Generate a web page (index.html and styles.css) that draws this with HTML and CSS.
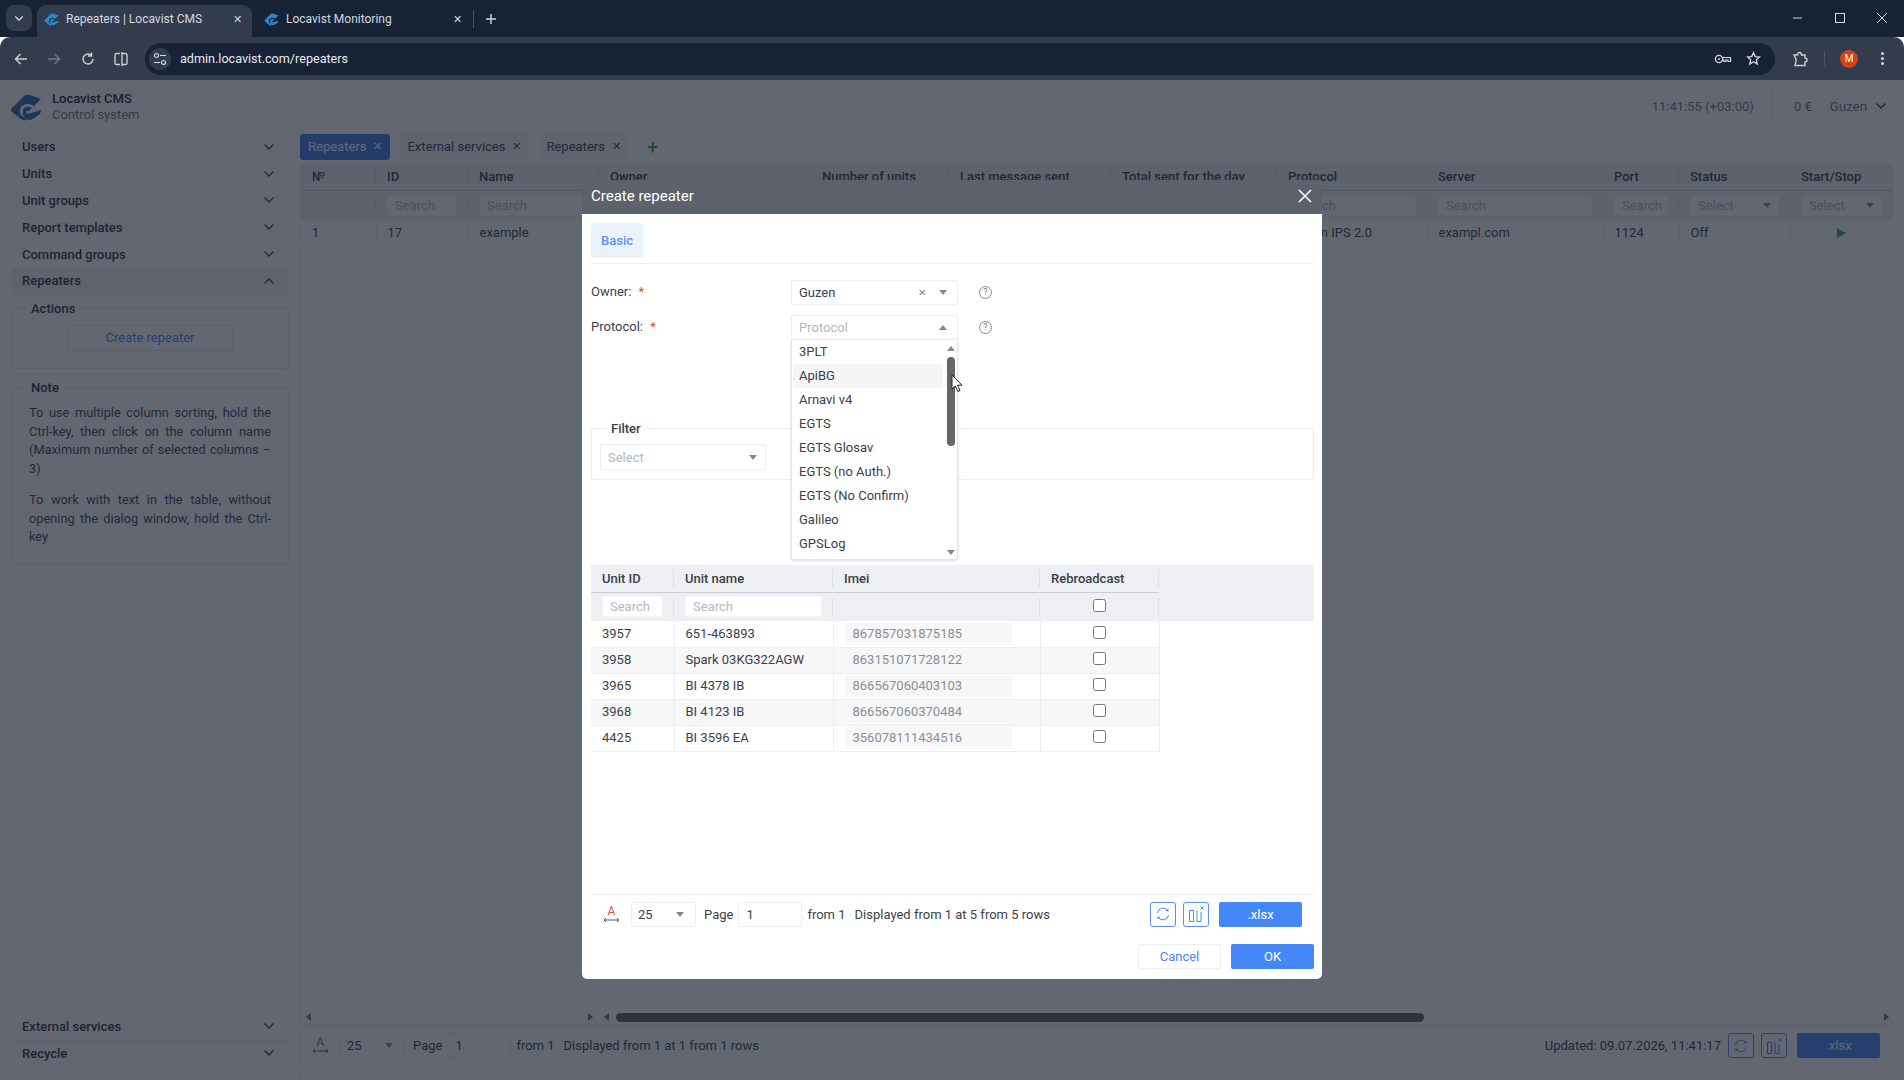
FILE: index.html
```html
<!DOCTYPE html>
<html lang="en">
<head>
  <meta charset="UTF-8">
  <title>Repeaters | Locavist CMS</title>
  <link rel="stylesheet" href="styles.css">
</head>
<body>

  <svg class="defs" width="0" height="0">
    <symbol id="logo" viewBox="0 0 32 27">
      <path d="M1 15 L13 3 Q16 0 20 1 L31 5 L24 12 Q17 8 12 12 Q8 16 11 21 L17 26 Q14 27 11 25 L2 18 Q0 16 1 15Z"/>
      <path d="M14 14 Q18 11 22 14 L19 17 Q17 16 16 18 Q16 20 18 20 L31 16 L30 20 L21 26 Q15 26 13 21 Q12 17 14 14Z"/>
    </symbol>
    <symbol id="chev" viewBox="0 0 12 8">
      <path d="M1.5 1.5 L6 6 L10.5 1.5" fill="none" stroke="currentColor" stroke-width="1.5"/>
    </symbol>
    <symbol id="refresh" viewBox="0 0 16 16">
      <path d="M2.5 7 A5.5 5.5 0 0 1 12.5 4.5 M13.5 9 A5.5 5.5 0 0 1 3.5 11.5" fill="none" stroke="currentColor" stroke-width="1"/>
      <path d="M10.5 5 L13.5 5.5 L13.5 2.5Z M5.5 11 L2.5 10.5 L2.5 13.5Z" fill="currentColor"/>
    </symbol>
    <symbol id="cols" viewBox="0 0 18 18">
      <path d="M2.5 5.5 H6.5 V16.5 H2.5Z M10 5.5 V16.5 H14 V7" fill="none" stroke="currentColor" stroke-width="1"/>
      <path d="M13.5 1.5 L16.5 4.5 M16.5 1.5 L13.5 4.5" stroke="currentColor" stroke-width="1"/>
    </symbol>
    <symbol id="width" viewBox="0 0 17 6">
      <path d="M1 3 H16 M3 1 L1 3 L3 5 M14 1 L16 3 L14 5" fill="none" stroke="#555" stroke-width="1"/>
    </symbol>
  </svg>

  <!-- Browser tabs -->
  <div class="tabstrip">
    <div class="tab-list">
      <svg width="10" height="7" class="ic-light"><use href="#chev"/></svg>
    </div>
    <div class="browser-tab active">
      <svg class="favicon"><use href="#logo"/></svg>
      <span class="browser-tab-title">Repeaters | Locavist CMS</span>
      <span class="browser-tab-x">✕</span>
    </div>
    <div class="browser-tab">
      <svg class="favicon"><use href="#logo"/></svg>
      <span class="browser-tab-title">Locavist Monitoring</span>
      <span class="browser-tab-x">✕</span>
    </div>
    <div class="tab-sep"></div>
    <svg class="new-tab" width="12" height="12" viewBox="0 0 12 12"><path d="M6 1V11M1 6H11" stroke="#d5d9e0" stroke-width="1.4"/></svg>
    <div class="win-btns">
      <svg width="12" height="12" viewBox="0 0 12 12"><path d="M1 6H10" stroke="#d5d9e0"/></svg>
      <svg width="12" height="12" viewBox="0 0 12 12"><rect x="1.5" y="1.5" width="9" height="9" fill="none" stroke="#d5d9e0"/></svg>
      <svg width="12" height="12" viewBox="0 0 12 12"><path d="M1 1L11 11M11 1L1 11" stroke="#d5d9e0"/></svg>
    </div>
  </div>

  <!-- Browser toolbar -->
  <div class="toolbar">
    <svg class="tool" viewBox="0 0 16 16"><path d="M14 8H3M7.5 3L2.5 8L7.5 13" fill="none" stroke="#c9ced6" stroke-width="1.5"/></svg>
    <svg class="tool fwd" viewBox="0 0 16 16"><path d="M2 8H13M8.5 3L13.5 8L8.5 13" fill="none" stroke="#6d7684" stroke-width="1.5"/></svg>
    <svg class="tool" viewBox="0 0 16 16"><path d="M13 8A5 5 0 1 1 11 4M11.5 1.5V5H8" fill="none" stroke="#c9ced6" stroke-width="1.5"/></svg>
    <svg class="tool split" viewBox="0 0 16 16"><path d="M7 2.5H3.5Q2 2.5 2 4V12Q2 13.5 3.5 13.5H7M9 1V15M9 2.5H12.5Q14 2.5 14 4V12Q14 13.5 12.5 13.5H9" fill="none" stroke="#c9ced6" stroke-width="1.4"/></svg>
    <div class="urlbar">
      <span class="tune">
        <svg width="14" height="14" viewBox="0 0 14 14"><circle cx="3.5" cy="3.5" r="2" fill="none" stroke="#d5d9e0" stroke-width="1.2"/><path d="M7 3.5H13M1 10.5H7" stroke="#d5d9e0" stroke-width="1.2"/><circle cx="10.5" cy="10.5" r="2" fill="none" stroke="#d5d9e0" stroke-width="1.2"/></svg>
      </span>
      <span class="url">admin.locavist.com/repeaters</span>
      <svg class="url-ic" width="18" height="12" viewBox="0 0 18 12"><circle cx="5" cy="6" r="3.6" fill="none" stroke="#d5d9e0" stroke-width="1.4"/><circle cx="5" cy="6" r="1" fill="#d5d9e0"/><path d="M8.5 4.5H16.5V8.5H14V7H12V8.5H10V7.2H8.5" fill="none" stroke="#d5d9e0" stroke-width="1.2"/></svg>
      <svg class="url-ic" width="15" height="15" viewBox="0 0 16 16"><path d="M8 1.8L9.9 6L14.4 6.4L11 9.4L12 13.9L8 11.5L4 13.9L5 9.4L1.6 6.4L6.1 6Z" fill="none" stroke="#d5d9e0" stroke-width="1.4"/></svg>
    </div>
    <svg class="tool ext" viewBox="0 0 16 16"><path d="M2 4H5.5Q5.5 1.5 7.5 1.5Q9.5 1.5 9.5 4H13V7Q15 7 15 9Q15 11 13 11V14.5H2.8L4 11V8L2 4Z" fill="none" stroke="#c9ced6" stroke-width="1.4"/></svg>
    <div class="tool-sep"></div>
    <span class="avatar">M</span>
    <span class="dots"><i></i><i></i><i></i></span>
  </div>

  <!-- Page -->
  <div class="page">
    <header class="topbar">
      <svg class="logo"><use href="#logo"/></svg>
      <div class="brand">
        <div class="brand-name">Locavist CMS</div>
        <div class="brand-sub">Control system</div>
      </div>
      <div class="top-right">
        <span class="clock">11:41:55 (+03:00)</span>
        <span class="balance">0 €</span>
        <span class="user">Guzen</span>
        <svg class="chev" width="12" height="8"><use href="#chev"/></svg>
      </div>
    </header>

    <div class="workspace">
      <aside class="sidebar">
        <div class="menu-item">Users<svg class="chev" width="12" height="8"><use href="#chev"/></svg></div>
        <div class="menu-item">Units<svg class="chev" width="12" height="8"><use href="#chev"/></svg></div>
        <div class="menu-item">Unit groups<svg class="chev" width="12" height="8"><use href="#chev"/></svg></div>
        <div class="menu-item">Report templates<svg class="chev" width="12" height="8"><use href="#chev"/></svg></div>
        <div class="menu-item">Command groups<svg class="chev" width="12" height="8"><use href="#chev"/></svg></div>
        <div class="menu-item open">Repeaters<svg class="chev up" width="12" height="8"><use href="#chev"/></svg></div>

        <fieldset class="side-box">
          <legend>Actions</legend>
          <div class="create-btn">Create repeater</div>
        </fieldset>

        <fieldset class="side-box note">
          <legend>Note</legend>
          <p>To use multiple column sorting, hold the Ctrl-key, then click on the column name (Maximum number of selected columns – 3)</p>
          <p>To work with text in the table, without opening the dialog window, hold the Ctrl-key</p>
        </fieldset>

        <div class="menu-bottom">
          <div class="menu-item">External services<svg class="chev" width="12" height="8"><use href="#chev"/></svg></div>
          <div class="menu-item">Recycle<svg class="chev" width="12" height="8"><use href="#chev"/></svg></div>
        </div>
      </aside>

      <main class="main">
        <div class="page-tabs">
          <div class="page-tab current">Repeaters<span class="tab-x">✕</span></div>
          <div class="page-tab">External services<span class="tab-x">✕</span></div>
          <div class="page-tab">Repeaters<span class="tab-x">✕</span></div>
          <span class="tab-add">+</span>
        </div>

        <div class="table-area">
          <table class="grid main-grid">
            <colgroup>
              <col style="width:75px"><col style="width:92px"><col style="width:131px"><col style="width:212px">
              <col style="width:138px"><col style="width:162px"><col style="width:166px"><col style="width:150px">
              <col style="width:176px"><col style="width:76px"><col style="width:111px"><col style="width:103px">
            </colgroup>
            <tr class="head">
              <th>№</th><th>ID</th><th>Name</th><th>Owner</th><th>Number of units</th><th>Last message sent</th>
              <th>Total sent for the day</th><th>Protocol</th><th>Server</th><th>Port</th><th>Status</th><th>Start/Stop</th>
            </tr>
            <tr class="filters">
              <th></th>
              <th><span class="inp">Search</span></th>
              <th><span class="inp">Search</span></th>
              <th></th>
              <th></th><th></th><th></th>
              <th><span class="inp">Search</span></th>
              <th><span class="inp">Search</span></th>
              <th><span class="inp">Search</span></th>
              <th><span class="inp sel ph">Select<i class="caret"></i></span></th>
              <th><span class="inp sel ph">Select<i class="caret"></i></span></th>
            </tr>
            <tr class="row">
              <td>1</td><td>17</td><td>example</td><td></td><td></td><td></td><td></td><td>Wialon IPS 2.0</td><td>exampl.com</td><td>1124</td><td>Off</td>
              <td class="center"><i class="play"></i></td>
            </tr>
          </table>
        </div>

        <div class="hscroll">
          <i class="arr left"></i><span class="grow-a"></span><i class="arr right"></i>
          <i class="arr left second"></i>
          <span class="thumb"></span>
          <span class="grow-b"></span>
          <i class="arr right"></i>
        </div>

        <div class="pager">
          <span class="width-ic">A<svg width="17" height="6"><use href="#width"/></svg></span>
          <span class="inp sel size">25<i class="caret"></i></span>
          <span>Page</span>
          <span class="inp page-no">1</span>
          <span>from 1</span>
          <span class="shown">Displayed from 1 at 1 from 1 rows</span>
          <span class="pager-right">
            <span>Updated: 09.07.2026, 11:41:17</span>
            <span class="icon-btn"><svg width="16" height="16"><use href="#refresh"/></svg></span>
            <span class="icon-btn"><svg width="18" height="18"><use href="#cols"/></svg></span>
            <span class="btn primary xlsx">.xlsx</span>
          </span>
        </div>
      </main>
    </div>

    <div class="backdrop"></div>

    <!-- Create repeater dialog -->
    <div class="modal">
      <div class="modal-title">
        <span>Create repeater</span>
        <svg width="14" height="14" viewBox="0 0 14 14"><path d="M1 1L13 13M13 1L1 13" stroke="#fff" stroke-width="1.5"/></svg>
      </div>
      <div class="modal-body">
        <div class="modal-tabs"><span class="modal-tab">Basic</span></div>

        <div class="field">
          <label>Owner: <b>*</b></label>
          <span class="inp sel value">Guzen<span class="clear">✕</span><i class="caret"></i></span>
          <span class="help">?</span>
        </div>
        <div class="field">
          <label>Protocol: <b>*</b></label>
          <div class="combo">
            <span class="inp sel value ph">Protocol<i class="caret up"></i></span>
            <div class="dropdown">
              <div class="opt">3PLT</div>
              <div class="opt hover">ApiBG</div>
              <div class="opt">Arnavi v4</div>
              <div class="opt">EGTS</div>
              <div class="opt">EGTS Glosav</div>
              <div class="opt">EGTS (no Auth.)</div>
              <div class="opt">EGTS (No Confirm)</div>
              <div class="opt">Galileo</div>
              <div class="opt">GPSLog</div>
              <div class="vscroll"><i class="caret up"></i><span class="vthumb"></span><i class="caret"></i></div>
              <svg class="cursor" width="12" height="19" viewBox="0 0 12 19"><path d="M1 1V15L4.3 12L6.8 17.5L9 16.5L6.5 11.2H11Z" fill="#fff" stroke="#222" stroke-width="1"/></svg>
            </div>
          </div>
          <span class="help">?</span>
        </div>

        <fieldset class="filter-box">
          <legend>Filter</legend>
          <span class="inp sel ph filter-sel">Select<i class="caret"></i></span>
        </fieldset>

        <div class="units">
          <table class="grid unit-grid">
            <colgroup>
              <col style="width:83px"><col style="width:159px"><col style="width:207px"><col style="width:119px">
            </colgroup>
            <tr class="head"><th>Unit ID</th><th>Unit name</th><th>Imei</th><th>Rebroadcast</th></tr>
            <tr class="filters">
              <th><span class="inp">Search</span></th>
              <th><span class="inp">Search</span></th>
              <th></th>
              <th class="center"><input type="checkbox"></th>
            </tr>
            <tr class="row"><td>3957</td><td>651-463893</td><td><span class="imei">867857031875185</span></td><td class="center"><input type="checkbox"></td></tr>
            <tr class="row"><td>3958</td><td>Spark 03KG322AGW</td><td><span class="imei">863151071728122</span></td><td class="center"><input type="checkbox"></td></tr>
            <tr class="row"><td>3965</td><td>BI 4378 IB</td><td><span class="imei">866567060403103</span></td><td class="center"><input type="checkbox"></td></tr>
            <tr class="row"><td>3968</td><td>BI 4123 IB</td><td><span class="imei">866567060370484</span></td><td class="center"><input type="checkbox"></td></tr>
            <tr class="row"><td>4425</td><td>BI 3596 EA</td><td><span class="imei">356078111434516</span></td><td class="center"><input type="checkbox"></td></tr>
          </table>
        </div>

        <div class="pager modal-pager">
          <span class="width-ic">A<svg width="17" height="6"><use href="#width"/></svg></span>
          <span class="inp sel size">25<i class="caret"></i></span>
          <span>Page</span>
          <span class="inp page-no">1</span>
          <span>from 1</span>
          <span class="shown">Displayed from 1 at 5 from 5 rows</span>
          <span class="pager-right">
            <span class="icon-btn"><svg width="16" height="16"><use href="#refresh"/></svg></span>
            <span class="icon-btn"><svg width="18" height="18"><use href="#cols"/></svg></span>
            <span class="btn primary xlsx">.xlsx</span>
          </span>
        </div>

        <div class="modal-actions">
          <span class="btn cancel">Cancel</span>
          <span class="btn primary">OK</span>
        </div>
      </div>
    </div>
  </div>

</body>
</html>
```

FILE: styles.css
```css
* {
  box-sizing: border-box;
}
html, body {
  margin: 0;
  height: 100%;
}
body {
  display: flex;
  flex-direction: column;
  height: 1080px;
  overflow: hidden;
  font-family: Roboto, Arial, sans-serif;
  font-size: 13px;
  color: #3a3f4a;
  background: #fff;
}
.defs {
  position: absolute;
}

/* Browser chrome */
.tabstrip {
  display: flex;
  align-items: flex-end;
  height: 37px;
  padding-left: 6px;
  background: #172234;
  color: #d5d9e0;
  font-size: 12px;
}
.tab-list {
  display: flex;
  align-items: center;
  justify-content: center;
  width: 26px;
  height: 26px;
  margin: 0 5px 6px 0;
  border-radius: 8px;
  background: #323c4c;
}
.ic-light {
  color: #e4e7ec;
}
.browser-tab {
  display: flex;
  align-items: center;
  width: 215px;
  height: 32px;
  margin-right: 5px;
  padding: 0 10px 4px 7px;
  border-radius: 9px 9px 0 0;
}
.browser-tab.active {
  background: #323c4c;
}
.favicon {
  width: 15px;
  height: 13px;
  margin-right: 7px;
  fill: #2f86cf;
}
.browser-tab-title {
  flex: 1;
  white-space: nowrap;
}
.browser-tab-x {
  font-size: 11px;
}
.tab-sep {
  width: 1px;
  height: 18px;
  margin: 0 0 9px -4px;
  background: #4a5362;
}
.new-tab {
  margin: 0 0 12px 11px;
}
.win-btns {
  display: flex;
  gap: 30px;
  margin: 0 16px 13px auto;
}
.toolbar {
  display: flex;
  align-items: center;
  height: 43px;
  padding: 0 20px 0 13px;
  border-radius: 10px 10px 0 0;
  background: #323c4c;
}
.tool {
  flex: none;
  width: 16px;
  height: 16px;
  margin-right: 17px;
}
.tool.fwd {
  margin-right: 18px;
}
.tool.split {
  margin-right: 16px;
}
.urlbar {
  display: flex;
  align-items: center;
  flex: 1;
  height: 32px;
  padding: 0 14px 0 4px;
  border-radius: 16px;
  background: #172234;
  color: #e6e9ee;
}
.tune {
  display: flex;
  align-items: center;
  justify-content: center;
  width: 22px;
  height: 22px;
  margin-right: 9px;
  border-radius: 50%;
  background: #323c4c;
}
.url {
  flex: 1;
  font-size: 12.6px;
}
.url-ic {
  margin-left: 14px;
}
.ext {
  margin: 0 16px 0 17px;
}
.tool-sep {
  width: 1px;
  height: 15px;
  margin-right: 15px;
  background: #4a5362;
}
.avatar {
  display: flex;
  align-items: center;
  justify-content: center;
  width: 18px;
  height: 18px;
  margin-right: 23px;
  border-radius: 50%;
  background: #d8401a;
  color: #fff;
  font-size: 10px;
}
.dots {
  display: flex;
  flex-direction: column;
  gap: 2px;
}
.dots i {
  width: 3px;
  height: 3px;
  border-radius: 50%;
  background: #d5d9e0;
}

/* Page */
.page {
  position: relative;
  display: flex;
  flex-direction: column;
  flex: 1;
  min-height: 0;
}
.topbar {
  display: flex;
  align-items: center;
  height: 52px;
  padding: 0 17px 0 10px;
}
.logo {
  width: 32px;
  height: 27px;
  margin: 2px 10px 0 0;
  fill: #2b6cab;
}
.brand-name {
  font-weight: 500;
  color: #1f2530;
  line-height: 16px;
}
.brand-sub {
  line-height: 15px;
  color: #737883;
}
.top-right {
  display: flex;
  align-items: center;
  margin-left: auto;
  color: #737883;
}
.clock {
  padding: 8px 18px 8px 0;
  border-right: 1px solid #e3e4e8;
}
.balance {
  margin: 0 18px 0 21px;
}
.user {
  margin-right: 8px;
  font-size: 13.3px;
}
.chev {
  color: #444a55;
}
.chev.up {
  transform: rotate(180deg);
}
.workspace {
  display: flex;
  flex: 1;
  min-height: 0;
}

/* Sidebar */
.sidebar {
  display: flex;
  flex-direction: column;
  flex: none;
  width: 301px;
  padding: 2px 11px 14px 11px;
  border-right: 1px solid #eceef1;
}
.menu-item {
  display: flex;
  align-items: center;
  justify-content: space-between;
  flex: none;
  height: 26.8px;
  padding: 0 14px 2px 11px;
  border-top: 1px solid #eceef1;
  font-weight: 500;
  color: #2e3440;
}
.menu-item.open {
  background: #f1f2f5;
  border-top-color: #f1f2f5;
}
.side-box {
  margin: 6px 0 0;
  padding: 0 17px 0;
  border: 1px solid #e8e9ed;
  border-radius: 4px;
  min-width: 0;
}
.side-box legend {
  margin-left: -3px;
  padding: 0 5px;
  font-weight: 500;
  color: #2e3440;
}
.create-btn {
  width: 166px;
  height: 26px;
  margin: 9px auto 17px;
  border: 1px solid #e8e9ed;
  color: #4c83ee;
  line-height: 24px;
  text-align: center;
}
.note {
  margin-top: 11px;
}
.note p {
  margin: 9.5px 0 13px;
  font-size: 12.8px;
  line-height: 18.5px;
  text-align: justify;
  color: #3d4452;
}
.note p:last-child {
  margin-bottom: 17px;
}
.menu-bottom {
  margin-top: auto;
  margin-bottom: -1px;
}

/* Main area */
.main {
  display: flex;
  flex-direction: column;
  flex: 1;
  min-width: 0;
  padding: 0 12px 13px 0;
}
.page-tabs {
  display: flex;
  align-items: center;
  gap: 9px;
  flex: none;
  height: 31px;
  margin-left: -1px;
  padding: 2px 0 3px;
}
.page-tab {
  display: flex;
  align-items: center;
  height: 26px;
  padding: 0 8px 2px;
  border-radius: 3px;
  background: #f3f4f6;
  color: #3d4452;
}
.page-tab.current {
  background: #3f7df0;
  color: #fff;
}
.tab-x {
  margin-left: 7px;
  font-size: 11px;
}
.tab-add {
  margin-left: 9px;
  color: #2fa33a;
  font-size: 20px;
  line-height: 20px;
}
.table-area {
  flex: 1;
  min-height: 0;
}
.grid {
  border-collapse: collapse;
  table-layout: fixed;
}
.main-grid {
  width: 1592px;
}
.grid th {
  font-weight: 500;
  text-align: left;
  white-space: nowrap;
  color: #3a3f4a;
  background: linear-gradient(#dfe0e6, #dfe0e6) right center / 1px 18px no-repeat;
}
.grid .head th {
  height: 27px;
  padding: 0 11px;
  border-bottom: 1px solid #c9ccd6;
}
.main-grid tr.head, .main-grid tr.filters {
  background: #eeeff3;
}
.grid .filters th {
  height: 30px;
  padding: 0 11px;
}
.grid td {
  height: 25px;
  padding: 0 11px;
  border-right: 1px solid #eceef1;
  border-bottom: 1px solid #eceef1;
  white-space: nowrap;
  overflow: hidden;
}
.grid .center {
  text-align: center;
}
.inp {
  display: flex;
  align-items: center;
  height: 21px;
  padding: 0 7px;
  border: 1px solid #eceef1;
  border-radius: 2px;
  background: #fff;
  color: #3a3f4a;
  font-weight: 400;
}
.filters .inp {
  border-color: #f4f5f7;
  color: #b4b7bf;
  overflow: hidden;
}
.sel {
  position: relative;
  justify-content: space-between;
}
.ph {
  color: #b4b7bf;
}
.caret {
  flex: none;
  width: 0;
  height: 0;
  border-left: 4.5px solid transparent;
  border-right: 4.5px solid transparent;
  border-top: 5px solid #888;
}
.caret.up {
  border-top: 0;
  border-bottom: 5px solid #888;
}
.play {
  display: inline-block;
  width: 0;
  height: 0;
  border-top: 5px solid transparent;
  border-bottom: 5px solid transparent;
  border-left: 9px solid #36b24a;
  vertical-align: middle;
}

/* Scrollbar and pager */
.hscroll {
  display: flex;
  align-items: center;
  gap: 4px;
  flex: none;
  height: 15px;
  padding: 0 3px 0 5px;
  border-bottom: 1px solid #eceef1;
}
.grow-a {
  width: 269px;
}
.grow-b {
  flex: 1;
}
.arr {
  width: 0;
  height: 0;
  border-top: 4px solid transparent;
  border-bottom: 4px solid transparent;
}
.arr.left {
  border-right: 5px solid #777;
}
.arr.right {
  border-left: 5px solid #777;
}
.arr.second {
  margin-left: 7px;
}
.thumb {
  width: 808px;
  height: 9px;
  margin-left: 3px;
  border-radius: 5px;
  background: #636363;
}
.pager {
  display: flex;
  align-items: center;
  flex: none;
  height: 42px;
  padding: 0 12px 0 11px;
  border-bottom: 1px solid #eceef1;
}
.width-ic {
  display: flex;
  flex-direction: column;
  align-items: center;
  flex: none;
  width: 17px;
  margin-right: 11px;
  color: #d9534f;
  font-size: 12px;
  line-height: 11px;
}
.size {
  width: 65px;
  height: 25px;
  margin-right: 8px;
  padding: 0 11px 0 6px;
}
.page-no {
  width: 64px;
  height: 25px;
  margin: 0 5px;
}
.shown {
  margin-left: 9px;
}
.pager-right {
  display: flex;
  align-items: center;
  gap: 7px;
  margin-left: auto;
}
.icon-btn {
  display: flex;
  align-items: center;
  justify-content: center;
  width: 26px;
  height: 25px;
  border: 1px solid #5a8ff0;
  border-radius: 3px;
  color: #4a86f0;
}
.btn {
  display: flex;
  align-items: center;
  justify-content: center;
  width: 83px;
  height: 25px;
  border-radius: 2px;
}
.primary {
  background: #4488f8;
  color: #fff;
}
.xlsx {
  margin-left: 3px;
}
.cancel {
  border: 1px solid #eceef1;
  color: #4a86f0;
}

/* Dialog */
.backdrop {
  position: absolute;
  inset: 0;
  background: rgba(22, 28, 43, 0.67);
}
.modal {
  position: absolute;
  left: 582px;
  top: 100px;
  display: flex;
  flex-direction: column;
  width: 740px;
  height: 799px;
}
.modal-title {
  display: flex;
  align-items: center;
  justify-content: space-between;
  flex: none;
  height: 34px;
  padding: 0 10px 2px 9px;
  border-radius: 3px 3px 0 0;
  background: #5c616b;
  color: #fff;
  font-size: 15px;
  font-weight: 400;
}
.modal-body {
  display: flex;
  flex-direction: column;
  flex: 1;
  min-height: 0;
  padding: 9px 8px 10px 9px;
  border-radius: 0 0 5px 5px;
  background: #fff;
}
.modal-tabs {
  flex: none;
  height: 41px;
  margin-bottom: 16px;
  border-bottom: 1px solid #eceef1;
}
.modal-tab {
  display: inline-block;
  width: 52px;
  height: 35px;
  border-radius: 3px;
  background: #eaf2fe;
  color: #5c93f7;
  font-weight: 500;
  line-height: 35px;
  text-align: center;
}
.field {
  display: flex;
  align-items: center;
  flex: none;
  height: 25px;
  margin-bottom: 10px;
}
.field label {
  width: 200px;
  margin-top: -3px;
}
.field label b {
  margin-left: 4px;
  color: #e8453c;
  font-weight: 400;
}
.value {
  width: 167px;
  height: 25px;
  padding-right: 10px;
}
.clear {
  margin: 0 13px 0 auto;
  color: #888;
  font-size: 10px;
}
.combo {
  position: relative;
}
.help {
  width: 13px;
  height: 13px;
  margin-left: 21px;
  border: 1px solid #888;
  border-radius: 50%;
  color: #777;
  font-size: 9px;
  line-height: 11px;
  text-align: center;
}
.dropdown {
  position: absolute;
  left: 0;
  top: 25px;
  z-index: 2;
  width: 167px;
  height: 220px;
  padding: 0 0 0 1px;
  border: 1px solid #e2e3e7;
  border-top: 0;
  border-radius: 0 0 2px 2px;
  background: #fff;
  box-shadow: 0 1px 3px rgba(0, 0, 0, 0.15);
  color: #3a3f4a;
}
.opt {
  height: 24px;
  margin-right: 14px;
  padding-left: 6px;
  line-height: 24px;
}
.opt.hover {
  background: #f5f5f5;
}
.vscroll {
  position: absolute;
  right: 2px;
  top: 6px;
  bottom: 4px;
  display: flex;
  flex-direction: column;
  align-items: center;
  justify-content: space-between;
  width: 9px;
}
.vscroll .caret {
  border-left-width: 4px;
  border-right-width: 4px;
}
.vthumb {
  width: 8px;
  height: 89px;
  margin: 6px 0 auto;
  border-radius: 4px;
  background: #666;
}
.cursor {
  position: absolute;
  left: 159px;
  top: 34px;
}
.filter-box {
  flex: none;
  height: 59px;
  margin: 71px 0 0;
  padding: 0 8px;
  border: 1px solid #eceef1;
  border-radius: 2px;
  min-width: 0;
}
.filter-box legend {
  margin-left: 6px;
  padding: 0 5px;
  font-weight: 500;
}
.filter-sel {
  width: 166px;
  height: 26px;
  margin-top: 8px;
  padding-right: 8px;
}
.units {
  flex: 1;
  min-height: 0;
  margin-top: 85px;
  background: linear-gradient(#eeeff3 56px, transparent 56px);
}
.unit-grid {
  width: 568px;
}
.unit-grid .filters th {
  height: 29px;
}
.unit-grid .inp {
  height: 21px;
}
.unit-grid .row td {
  height: 26px;
  padding-bottom: 1px;
}
.unit-grid .row:nth-child(even) td {
  background: #f7f7f8;
}
.unit-grid input {
  width: 13px;
  height: 13px;
  margin: 0 0 3px;
  vertical-align: middle;
}
.imei {
  display: block;
  width: 167px;
  height: 22px;
  margin-top: 1px;
  padding-left: 8px;
  border-radius: 2px;
  background: #f7f7f8;
  color: #8a8d95;
  line-height: 22px;
}
.modal-pager {
  height: 44px;
  padding: 0 12px 5px 12px;
  border-top: 1px solid #eceef1;
  border-bottom: 0;
}
.modal-actions {
  display: flex;
  justify-content: flex-end;
  gap: 10px;
  flex: none;
  margin-top: 6px;
}
```
